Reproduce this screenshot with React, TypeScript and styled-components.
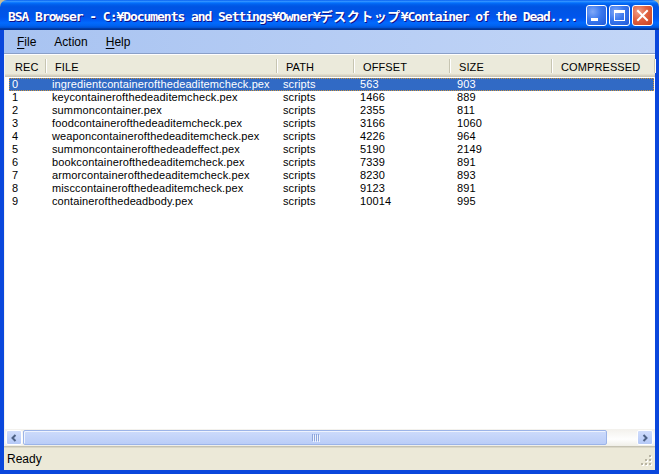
import styled, { createGlobalStyle } from 'styled-components';

type Entry = { rec: number; file: string; path: string; offset: number; size: number };

const entries: Entry[] = [
  { rec: 0, file: 'ingredientcontainerofthedeaditemcheck.pex', path: 'scripts', offset: 563, size: 903 },
  { rec: 1, file: 'keycontainerofthedeaditemcheck.pex', path: 'scripts', offset: 1466, size: 889 },
  { rec: 2, file: 'summoncontainer.pex', path: 'scripts', offset: 2355, size: 811 },
  { rec: 3, file: 'foodcontainerofthedeaditemcheck.pex', path: 'scripts', offset: 3166, size: 1060 },
  { rec: 4, file: 'weaponcontainerofthedeaditemcheck.pex', path: 'scripts', offset: 4226, size: 964 },
  { rec: 5, file: 'summoncontainerofthedeadeffect.pex', path: 'scripts', offset: 5190, size: 2149 },
  { rec: 6, file: 'bookcontainerofthedeaditemcheck.pex', path: 'scripts', offset: 7339, size: 891 },
  { rec: 7, file: 'armorcontainerofthedeaditemcheck.pex', path: 'scripts', offset: 8230, size: 893 },
  { rec: 8, file: 'misccontainerofthedeaditemcheck.pex', path: 'scripts', offset: 9123, size: 891 },
  { rec: 9, file: 'containerofthedeadbody.pex', path: 'scripts', offset: 10014, size: 995 },
];

const columns = ['REC', 'FILE', 'PATH', 'OFFSET', 'SIZE', 'COMPRESSED'];

const GlobalStyle = createGlobalStyle`
  html, body {
    margin: 0;
    padding: 0;
    background: #c8bc96;
  }
`;

const Window = styled.div`
  width: 659px;
  height: 474px;
  display: flex;
  flex-direction: column;
  font-family: 'Liberation Sans', Arial, sans-serif;
`;

const TitleBar = styled.div`
  height: 30px;
  flex-shrink: 0;
  display: flex;
  align-items: center;
  padding: 0 6px 0 8px;
  border-radius: 7px 7px 0 0;
  background: linear-gradient(
    to bottom,
    #0058ee 0%,
    #3593ff 4%,
    #288eff 6%,
    #127dff 8%,
    #036ffc 10%,
    #0262ee 14%,
    #0057e5 20%,
    #0054e3 24%,
    #0055eb 56%,
    #005bf5 66%,
    #026afe 76%,
    #0062ef 86%,
    #0052d6 92%,
    #0040ab 94%,
    #003092 100%
  );
`;

const Title = styled.div`
  flex: 1;
  overflow: hidden;
  white-space: nowrap;
  color: #ffffff;
  font-family: 'DejaVu Sans Mono', 'Noto Sans CJK JP', monospace;
  font-weight: bold;
  font-size: 13px;
  letter-spacing: -1.05px;
  text-shadow: 1px 1px #0f1089;
  padding-top: 1px;
`;

const Kana = styled.span`
  font-family: 'Noto Sans CJK JP', sans-serif;
  letter-spacing: 0.5px;
`;

const Caption = styled.div`
  display: flex;
  gap: 2px;
`;

const CaptionButton = styled.div<{ $close?: boolean }>`
  width: 21px;
  height: 21px;
  box-sizing: border-box;
  border: 1px solid #ffffff;
  border-radius: 3px;
  display: flex;
  align-items: center;
  justify-content: center;
  background: ${(p) =>
    p.$close
      ? 'radial-gradient(circle at 30% 30%, #f0a08a 0%, #e0603f 45%, #c6401f 100%)'
      : 'radial-gradient(circle at 30% 30%, #7fa8f8 0%, #3a78ee 45%, #1f58d8 100%)'};
`;

const Body = styled.div`
  flex: 1;
  display: flex;
  flex-direction: column;
  border: 4px solid #0a47dc;
  border-top: none;
  min-height: 0;
`;

const MenuBar = styled.div`
  height: 23px;
  flex-shrink: 0;
  display: flex;
  align-items: center;
  padding-left: 4px;
  background: linear-gradient(to right, #a8c3f1, #c3d6f7);
  border-bottom: 1px solid #8aa0c8;
`;

const MenuItem = styled.div`
  padding: 0 9px;
  font-size: 12px;
  color: #000000;
  u {
    text-decoration: underline;
    text-underline-offset: 2px;
  }
`;

const ListView = styled.div`
  flex: 1;
  display: flex;
  flex-direction: column;
  background: #ffffff;
  border-top: 1px solid #ffffff;
  border-left: 1px solid #f0f0f0;
  min-height: 0;
`;

const Header = styled.div`
  height: 22px;
  flex-shrink: 0;
  display: grid;
  grid-template-columns: 41px 231px 77px 96px 102px 1fr;
  background: #ebeadb;
  box-shadow: inset 0 -1px #cbc7b8, inset 0 -2px #d6d2c2, inset 0 -3px #e2decd;
`;

const HeaderCell = styled.div<{ $first?: boolean }>`
  position: relative;
  display: flex;
  align-items: center;
  padding-left: ${(p) => (p.$first ? 10 : 9)}px;
  padding-top: 2px;
  font-size: 11px;
  letter-spacing: 0.1px;
  color: #000000;
  &::after {
    content: '';
    position: absolute;
    right: 0;
    top: 4px;
    bottom: 4px;
    width: 1px;
    background: #c7c5b2;
    box-shadow: 1px 0 #ffffff;
  }
`;

const Rows = styled.div`
  flex: 1;
  padding: 1px 1px 0 4px;
  min-height: 0;
`;

const Row = styled.div<{ $selected?: boolean }>`
  height: 13px;
  box-sizing: border-box;
  display: grid;
  grid-template-columns: 37px 231px 77px 96px 102px 1fr;
  align-items: center;
  font-size: 11px;
  letter-spacing: 0.12px;
  color: ${(p) => (p.$selected ? '#ffffff' : '#000000')};
  background: ${(p) => (p.$selected ? '#316ac5' : 'transparent')};
  border: 1px dotted ${(p) => (p.$selected ? '#ce953a' : 'transparent')};
`;

const Cell = styled.div<{ $pad?: number }>`
  padding-left: ${(p) => p.$pad ?? 5}px;
  white-space: nowrap;
  overflow: hidden;
  line-height: 11px;
`;

const ScrollBar = styled.div`
  height: 17px;
  flex-shrink: 0;
  display: flex;
  align-items: center;
  gap: 1px;
  padding: 0 2px 0 1px;
  background: linear-gradient(to bottom, #f3f1ec, #fefefe 60%, #f0efe8);
`;

const ArrowButton = styled.div`
  width: 16px;
  height: 15px;
  box-sizing: border-box;
  border: 1px solid #ffffff;
  border-radius: 2px;
  background: linear-gradient(to bottom, #d0ddfc, #b5c9f7);
  display: flex;
  align-items: center;
  justify-content: center;
`;

const Track = styled.div`
  flex: 1;
  height: 15px;
  display: flex;
  align-items: center;
`;

const Thumb = styled.div`
  height: 15px;
  box-sizing: border-box;
  border: 1px solid #9cb4e8;
  border-radius: 2px;
  background: linear-gradient(to bottom, #cddbfb, #bacdf8);
  box-shadow: inset 1px 1px #eef3fe;
  display: flex;
  align-items: center;
  justify-content: center;
`;

const Grip = styled.div`
  display: flex;
  gap: 1px;
  span {
    width: 1px;
    height: 7px;
    background: #8ea6dc;
    box-shadow: 1px 1px #eef3fe;
  }
`;

const StatusBar = styled.div`
  height: 24px;
  flex-shrink: 0;
  display: flex;
  align-items: center;
  justify-content: space-between;
  padding: 0 2px 0 3px;
  background: #ece9d8;
  box-shadow: inset 0 1px #c5c2b2, inset 0 2px #dad7c7;
  font-size: 12px;
  color: #000000;
`;

const StatusText = styled.div`
  padding-top: 1px;
`;

const SizeGrip = styled.svg`
  align-self: flex-end;
  margin-bottom: 3px;
`;

function GripDots() {
  const dots: Array<[number, number]> = [
    [8, 0],
    [4, 4],
    [8, 4],
    [0, 8],
    [4, 8],
    [8, 8],
  ];
  return (
    <SizeGrip width="12" height="12" viewBox="0 0 12 12">
      {dots.map(([x, y]) => (
        <g key={`${x}-${y}`}>
          <rect x={x + 1} y={y + 1} width="2" height="2" fill="#ffffff" />
          <rect x={x} y={y} width="2" height="2" fill="#b8b4a2" />
        </g>
      ))}
    </SizeGrip>
  );
}

export default function App() {
  return (
    <>
      <GlobalStyle />
      <Window>
        <TitleBar>
          <Title>
            BSA Browser - C:¥Documents and Settings¥Owner¥<Kana>デスクトップ</Kana>¥Container of the Dead....
          </Title>
          <Caption>
            <CaptionButton>
              <svg width="19" height="19" viewBox="0 0 19 19">
                <rect x="4" y="12" width="7" height="3" fill="#ffffff" />
              </svg>
            </CaptionButton>
            <CaptionButton>
              <svg width="19" height="19" viewBox="0 0 19 19">
                <rect x="4.5" y="4.5" width="10" height="10" fill="none" stroke="#ffffff" strokeWidth="1" />
                <rect x="4" y="4" width="11" height="3" fill="#ffffff" />
              </svg>
            </CaptionButton>
            <CaptionButton $close>
              <svg width="19" height="19" viewBox="0 0 19 19">
                <path d="M5 5 L14 14 M14 5 L5 14" stroke="#ffffff" strokeWidth="2" strokeLinecap="square" />
              </svg>
            </CaptionButton>
          </Caption>
        </TitleBar>
        <Body>
          <MenuBar>
            <MenuItem>
              <u>F</u>ile
            </MenuItem>
            <MenuItem>Action</MenuItem>
            <MenuItem>
              <u>H</u>elp
            </MenuItem>
          </MenuBar>
          <ListView>
            <Header>
              {columns.map((c, i) => (
                <HeaderCell key={c} $first={i === 0}>
                  {c}
                </HeaderCell>
              ))}
            </Header>
            <Rows>
              {entries.map((e) => (
                <Row key={e.rec} $selected={e.rec === 0}>
                  <Cell $pad={2}>{e.rec}</Cell>
                  <Cell>{e.file}</Cell>
                  <Cell>{e.path}</Cell>
                  <Cell>{e.offset}</Cell>
                  <Cell $pad={6}>{e.size}</Cell>
                  <Cell />
                </Row>
              ))}
            </Rows>
            <ScrollBar>
              <ArrowButton>
                <svg width="8" height="8" viewBox="0 0 8 8">
                  <path d="M5.5 1 L2.5 4 L5.5 7" fill="none" stroke="#4d6185" strokeWidth="2" />
                </svg>
              </ArrowButton>
              <Track>
                <Thumb style={{ width: '584px' }}>
                  <Grip>
                    <span />
                    <span />
                    <span />
                    <span />
                  </Grip>
                </Thumb>
              </Track>
              <ArrowButton>
                <svg width="8" height="8" viewBox="0 0 8 8">
                  <path d="M2.5 1 L5.5 4 L2.5 7" fill="none" stroke="#4d6185" strokeWidth="2" />
                </svg>
              </ArrowButton>
            </ScrollBar>
          </ListView>
          <StatusBar>
            <StatusText>Ready</StatusText>
            <GripDots />
          </StatusBar>
        </Body>
      </Window>
    </>
  );
}
